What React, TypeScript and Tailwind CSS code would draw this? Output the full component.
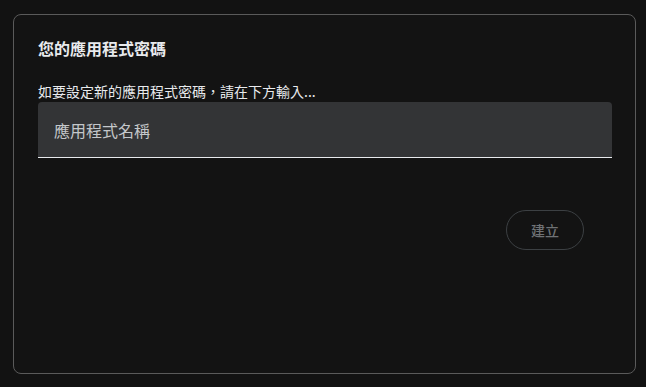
export default function App() {
  return (
    <div
      className="min-h-screen bg-[#121212] pt-[14px] pl-[13px]"
      style={{ fontFamily: '"Noto Sans CJK TC", "Noto Sans", sans-serif' }}
    >
      <div className="w-[623px] h-[360px] rounded-[8px] border border-[#5a5a5a] bg-[#131313] pl-[24px] pr-[23px] pt-[21px]">
        <h2 className="text-[16px] leading-[24px] font-bold text-[#e8eaed]">您的應用程式密碼</h2>
        <p className="mt-[21px] text-[14px] leading-[20px] text-[#e8eaed]">
          如要設定新的應用程式密碼，請在下方輸入...
        </p>
        <input
          type="text"
          placeholder="應用程式名稱"
          className="mt-[1px] block w-full h-[56px] rounded-t-[4px] bg-[#333436] border-b border-[#e8eaed] px-[16px] text-[16px] text-[#e8eaed] placeholder:text-[#c4c7ca] outline-none"
        />
        <div className="flex justify-end pr-[28px] mt-[52px]">
          <button className="h-[40px] w-[78px] rounded-full border border-[#3c4043] text-[14px] font-medium text-[#6f7275]">
            建立
          </button>
        </div>
      </div>
    </div>
  );
}
